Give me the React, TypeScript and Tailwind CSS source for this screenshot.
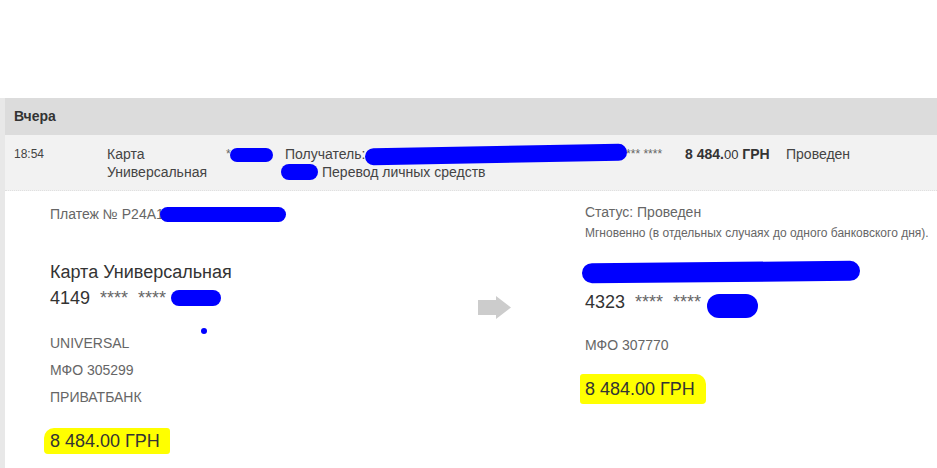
import React from 'react';

function Blob({ className }: { className: string }) {
  return <span className={`inline-block bg-[#0000ff] rounded-full align-middle ${className}`} />;
}

function Arrow() {
  return (
    <svg width="34" height="23" viewBox="0 0 34 23" className="block">
      <path d="M0 4 H18 V0 L33 11.5 L18 23 V19 H0 Z" fill="#cccccc" />
    </svg>
  );
}

export default function App() {
  return (
    <div className="w-[937px] h-[468px] overflow-hidden bg-white font-['Liberation_Sans',Arial,sans-serif] text-[#333]">
      <div className="h-[98px]" />
      <div className="flex h-[370px]">
        <div className="w-[5px] bg-[#e8e8e8]" />
        <div className="flex-1 flex flex-col">
          {/* day header */}
          <div className="h-[37px] bg-[#dcdcdc] pl-[9px] flex items-center text-[14px] font-bold text-[#333]">
            Вчера
          </div>

          {/* transaction row */}
          <div className="h-[56px] bg-[#f2f2f2] border-b border-dotted border-[#e0e0e0] flex pt-[10px] text-[14px] leading-[18px] text-[#444]">
            <div className="w-[102px] pl-[9px] text-[12px]">18:54</div>
            <div className="w-[119px]">
              <div>Карта</div>
              <div>Универсальная</div>
            </div>
            <div className="w-[59px] text-[12px] text-[#666]">
              *<Blob className="w-[43px] h-[14px] -ml-[1px]" />
            </div>
            <div className="w-[400px]">
              <div className="flex items-center">
                <span>Получатель:</span>
                <Blob className="w-[262px] h-[17px] -mr-[6px] rotate-[-1deg]" />
                <span className="text-[12px] text-[#666]">**** ****</span>
              </div>
              <div className="flex items-center">
                <Blob className="w-[37px] h-[16px] -ml-[4px] mr-[4px]" />
                <span>Перевод личных средств</span>
              </div>
            </div>
            <div className="w-[101px] font-bold text-[#333]">
              8 484.<span className="font-normal text-[13px]">00</span> ГРН
            </div>
            <div className="text-[#444]">Проведен</div>
          </div>

          {/* details */}
          <div className="flex pl-[45px] pt-[15px]">
            <div className="w-[428px] flex flex-col">
              <div className="flex items-center text-[14px] leading-[16px] text-[#666]">
                <span>Платеж № P24A1</span>
                <Blob className="w-[126px] h-[15px] -ml-[4px]" />
              </div>
              <div className="mt-[37px] text-[18px] leading-[26px] text-[#333]">Карта Универсальная</div>
              <div className="flex items-center text-[18px] leading-[26px] text-[#333]">
                <span>4149</span>
                <span className="ml-[10px] text-[#666]">****</span>
                <span className="ml-[10px] text-[#666]">****</span>
                <Blob className="ml-[5px] w-[50px] h-[16px]" />
              </div>
              <div className="relative mt-[19px] flex flex-col text-[14px] leading-[27px] text-[#666]">
                <span className="absolute left-[151px] top-[-2px] w-[6px] h-[6px] rounded-full bg-[#0000ff]" />
                <span>UNIVERSAL</span>
                <span>МФО 305299</span>
                <span>ПРИВАТБАНК</span>
              </div>
              <div className="mt-[17px] -ml-[6px]">
                <span className="inline-block bg-[#ffff00] pl-[6px] pr-[10px] text-[18px] leading-[26px] text-[#333] rounded-tl-[10px] rounded-bl-[4px] rounded-r-[3px]">
                  8 484.00 ГРН
                </span>
              </div>
            </div>

            <div className="w-[34px] pt-[90px]">
              <Arrow />
            </div>

            <div className="ml-[73px] flex flex-col">
              <div className="text-[14px] leading-[18px] text-[#666] mt-[-3px]">Статус: Проведен</div>
              <div className="mt-[3px] text-[12px] leading-[18px] text-[#666]">
                Мгновенно (в отдельных случаях до одного банковского дня).
              </div>
              <div className="mt-[17px] h-[26px] flex items-center -ml-[3px]">
                <Blob className="w-[278px] h-[20px] rotate-[-0.5deg]" />
              </div>
              <div className="mt-[4px] flex items-center text-[18px] leading-[26px] text-[#333]">
                <span>4323</span>
                <span className="ml-[10px] text-[#666]">****</span>
                <span className="ml-[10px] text-[#666]">****</span>
                <Blob className="relative top-[4px] ml-[6px] w-[51px] h-[24px]" />
              </div>
              <div className="mt-[17px] text-[14px] leading-[27px] text-[#666]">МФО 307770</div>
              <div className="mt-[15px] -ml-[5px]">
                <span className="inline-block bg-[#ffff00] pl-[5px] pr-[11px] py-[2px] text-[18px] leading-[26px] text-[#333] rounded-tr-[10px] rounded-l-[3px] rounded-br-[4px]">
                  8 484.00 ГРН
                </span>
              </div>
            </div>
          </div>
        </div>
      </div>
    </div>
  );
}
